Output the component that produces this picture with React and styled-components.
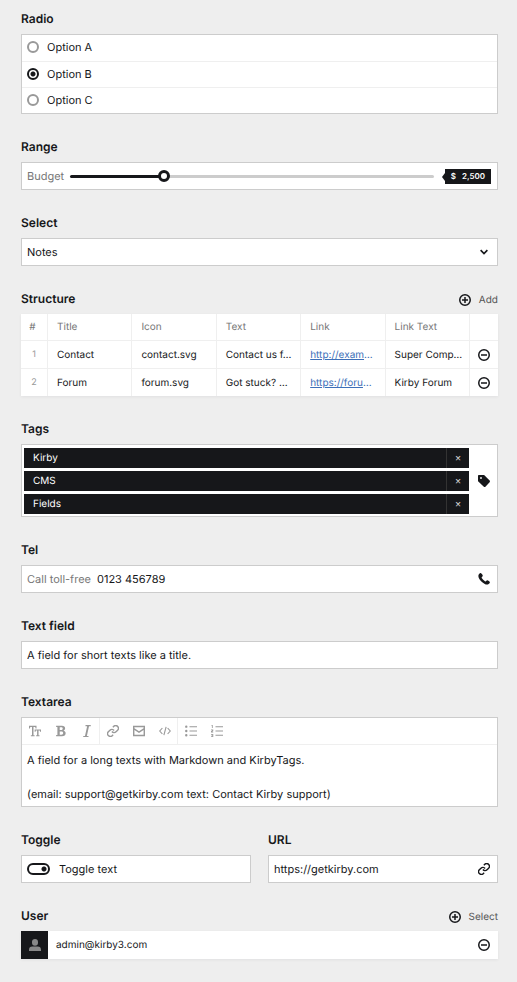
import React, { useState } from "react";
import styled, { createGlobalStyle, css } from "styled-components";

const INK = "#16171a";
const BORDER = "#ccc";
const LIGHT = "#efefef";
const MUTED = "#777";

const GlobalStyle = createGlobalStyle`
  *, *::before, *::after { box-sizing: border-box; }
  body {
    margin: 0;
    background: #eee;
    color: ${INK};
    font: 400 11px/16px Inter, "Liberation Sans", sans-serif;
    text-rendering: geometricPrecision;
  }
  button, input, textarea, select { font: inherit; color: inherit; text-rendering: inherit; }
  button { border: 0; padding: 0; background: none; cursor: pointer; }
`;

const Form = styled.form`
  display: flex;
  flex-direction: column;
  gap: 24px;
  padding: 10px 19px 23px 21px;
`;

const FieldSet = styled.fieldset`
  margin: 0;
  padding: 0;
  border: 0;
  min-width: 0;
`;

const Columns = styled.div`
  display: grid;
  grid-template-columns: 1fr 1fr;
  gap: 17px;
`;

const Header = styled.div`
  display: flex;
  justify-content: space-between;
  align-items: flex-start;
  height: 24px;
`;

const Label = styled.label`
  font-size: 12px;
  font-weight: 600;
  line-height: 18px;
`;

const HeaderButton = styled.button`
  display: flex;
  align-items: center;
  gap: 8px;
  height: 20px;
  font-size: 10px;
`;

const HeaderButtonText = styled.span`
  color: #555;
`;

const Box = styled.div`
  display: flex;
  align-items: center;
  min-height: 28px;
  background: #fff;
  border: 1px solid ${BORDER};
`;

const Affix = styled.span`
  padding-left: 5px;
  color: ${MUTED};
`;

const inputReset = css`
  flex: 1;
  min-width: 0;
  height: 26px;
  margin: 0;
  border: 0;
  padding: 0 5px;
  background: none;
  outline: 0;
`;

const TextInput = styled.input`
  ${inputReset}
  ${Affix} + & { padding-left: 6px; }
`;

const SelectInput = styled.select`
  ${inputReset}
  appearance: none;
`;

const IconCell = styled.span`
  display: flex;
  flex: none;
  align-items: center;
  justify-content: center;
  width: 26px;
`;

const Svg = styled.svg`
  display: block;
  flex: none;
  width: 12px;
  height: 12px;
  fill: currentColor;
`;

const Options = styled.ul`
  margin: 0;
  padding: 0;
  list-style: none;
  background: #fff;
  border: 1px solid ${BORDER};
`;

const Option = styled.li`
  height: 26px;
  & + & { border-top: 1px solid ${LIGHT}; }
`;

const OptionLabel = styled.label`
  display: flex;
  align-items: center;
  gap: 8px;
  height: 24px;
  padding-left: 5px;
`;

const RadioInput = styled.input`
  appearance: none;
  width: 12px;
  height: 12px;
  margin: 0;
  border: 2px solid #999;
  border-radius: 50%;
  &:checked {
    border-color: ${INK};
    background: radial-gradient(circle, ${INK} 0 2px, #fff 3px);
  }
`;

const RangeInput = styled.input`
  appearance: none;
  flex: 1;
  min-width: 0;
  height: 12px;
  margin: 0 0 0 6px;
  background: none;
  &::-webkit-slider-runnable-track {
    height: 3px;
    border-radius: 2px;
    background: linear-gradient(to right, ${INK} var(--fill), ${BORDER} var(--fill));
  }
  &::-webkit-slider-thumb {
    appearance: none;
    width: 12px;
    height: 12px;
    margin-top: -5px;
    border: 3px solid ${INK};
    border-radius: 50%;
    background: #fff;
  }
`;

const RangeTooltip = styled.output`
  position: relative;
  display: flex;
  gap: 6px;
  margin: 0 6px 0 11px;
  padding: 0 6px;
  background: ${INK};
  color: #fff;
  font-size: 8px;
  font-weight: 600;
  line-height: 15px;
  &::before {
    content: "";
    position: absolute;
    top: 4px;
    left: -3px;
    border: solid transparent;
    border-width: 4px 3px 4px 0;
    border-right-color: ${INK};
  }
`;

const Table = styled.table`
  width: 100%;
  table-layout: fixed;
  border-collapse: separate;
  border-spacing: 0;
  background: #fff;
  font-size: 10px;
  box-shadow: 0 1px 3px rgba(22, 23, 26, 0.06);
`;

const Cell = styled.td`
  height: 28px;
  padding: 0 4px 0 9px;
  border-right: 1px solid ${LIGHT};
  border-bottom: 1px solid ${LIGHT};
  text-align: left;
  font-weight: 400;
  white-space: nowrap;
  overflow: hidden;
  text-overflow: ellipsis;
  color: ${(p) => (p.$head ? MUTED : INK)};
  &:last-child { border-right: 0; }
  thead & { height: 27px; }
  tbody tr:last-child & { height: 27px; border-bottom: 0; }
`;

const IndexCell = styled(Cell)`
  width: 27px;
  padding: 0 ${(p) => (p.$head ? 3 : 0)}px 0 0;
  text-align: center;
  font-size: ${(p) => (p.$head ? 10 : 9)}px;
  color: ${(p) => (p.$head ? MUTED : "#999")};
`;

const ActionCell = styled(Cell)`
  width: 28px;
  padding: 0;
`;

const LinkCell = styled(Cell)`
  color: #3d6fb8;
`;

const Link = styled.a`
  color: inherit;
  text-decoration: underline;
`;

const IconButton = styled.button`
  display: flex;
  align-items: center;
  justify-content: center;
  width: 28px;
  height: 26px;
`;

const TagList = styled.div`
  display: flex;
  flex: 1;
  flex-direction: column;
  gap: 3px;
  padding: 3px 2px 2px;
`;

const Tag = styled.div`
  display: flex;
  align-items: center;
  height: 20px;
  padding-left: 9px;
  background: ${INK};
  color: #fff;
  font-size: 10px;
`;

const TagText = styled.span`
  flex: 1;
`;

const TagRemove = styled.button`
  width: 23px;
  height: 20px;
  border-left: 1px solid #333;
  color: #ccc;
  line-height: 20px;
`;

const Editor = styled.div`
  background: #fff;
  border: 1px solid ${BORDER};
`;

const Toolbar = styled.div`
  display: flex;
  height: 27px;
  border-bottom: 1px solid ${LIGHT};
  color: #999;
`;

const ToolGroup = styled.div`
  display: flex;
  & + & {
    margin-left: -1px;
    border-left: 1px solid ${LIGHT};
  }
`;

const ToolButton = styled.button`
  display: flex;
  align-items: center;
  justify-content: center;
  width: 26px;
`;

const TextArea = styled.textarea`
  display: block;
  width: 100%;
  height: 61px;
  padding: 7px 5px 3px;
  border: 0;
  outline: 0;
  resize: none;
  overflow: hidden;
  background: none;
  line-height: 17px;
`;

const ToggleLabel = styled.label`
  display: flex;
  align-items: center;
  gap: 9px;
  padding-left: 5px;
`;

const ToggleInput = styled.input`
  appearance: none;
  width: 23px;
  height: 12px;
  margin: 0;
  border: 2px solid ${INK};
  border-radius: 6px;
  background: radial-gradient(circle at 4px 4px, ${INK} 0 2px, #fff 3px);
  &:checked {
    background: radial-gradient(circle at 15px 4px, ${INK} 0 2px, #fff 3px);
  }
`;

const UserItem = styled.div`
  display: flex;
  align-items: center;
  height: 28px;
  background: #fff;
  font-size: 10px;
  box-shadow: 0 1px 3px rgba(22, 23, 26, 0.06);
`;

const Avatar = styled.span`
  display: flex;
  align-items: center;
  justify-content: center;
  align-self: stretch;
  width: 27px;
  background: ${INK};
  color: #888;
`;

const UserName = styled.span`
  flex: 1;
  padding-left: 8px;
`;

const icons = {
  add: <path d="M8 0a8 8 0 100 16A8 8 0 008 0zm0 14A6 6 0 118 2a6 6 0 010 12zM9 4H7v3H4v2h3v3h2V9h3V7H9z" />,
  remove: <path d="M8 0a8 8 0 100 16A8 8 0 008 0zm0 14A6 6 0 118 2a6 6 0 010 12zM4 7h8v2H4z" />,
  angle: <path d="M3.500 5.500L8 10l4.500-4.500" fill="none" stroke="currentColor" strokeWidth="2.200" />,
  tag: <path fillRule="evenodd" d="M1 0h6.5c.4 0 .7.1 1 .4l7 7c.6.6.6 1.5 0 2.1l-5.600 6c-.6.6-1.500.6-2.100 0L.4 8.500A1.500 1.500 0 010 7.500V1a1 1 0 011-1zm3 5.200a1.200 1.200 0 100-2.400 1.200 1.200 0 000 2.400z" />,
  phone: <path d="M1.200 1.800C2.200.6 3.300-.1 4.100.2c.8.4 2.200 2.400 2.300 3.300.1 1-1.700 1.800-1.600 2.600.1 1.300 3.700 5 5.100 5.100.8.1 1.600-1.700 2.600-1.600.9.1 2.900 1.500 3.300 2.300.3.8-.4 1.900-1.600 2.900-1.900 1.500-5.700.6-9.700-3.400S-.3 3.700 1.200 1.800z" />,
  title: <path d="M0 1h10v3.500H8.800L8.300 2.500H6v11h1.500V15h-5v-1.500H4v-11H1.700l-.5 2H0zM7.500 6H16v3h-1.200l-.4-1.600h-1.700v6.200H14V15H9.500v-1.400h1.300V7.400H9.200L8.700 9H7.500z" />,
  bold: <path fillRule="evenodd" d="M1.500 1h7.800c2.700 0 4.200 1.300 4.200 3.400 0 1.500-.8 2.600-2.200 3.100 1.900.4 2.900 1.600 2.900 3.400 0 2.600-1.800 4.100-4.900 4.100H1.500v-1.700h1.700V2.700H1.500zM6.300 2.900v3.900h2c1.300 0 2-.7 2-2s-.7-1.900-2-1.900zm0 5.600v4.600h2.300c1.500 0 2.300-.8 2.300-2.300s-.8-2.300-2.300-2.300z" />,
  italic: <path d="M6 0h7v1.500h-2.300L7.800 14.500H10V16H3v-1.500h2.300L8.200 1.500H6z" />,
  link: (
    <g fill="none" stroke="currentColor" strokeWidth="2.600" transform="translate(-.7 -.7) scale(.725)">
      <path d="M10 13a5 5 0 0 0 7.540.540l3-3a5 5 0 0 0-7.070-7.070l-1.720 1.710" />
      <path d="M14 11a5 5 0 0 0-7.540-.540l-3 3a5 5 0 0 0 7.070 7.070l1.710-1.710" />
    </g>
  ),
  email: <path fillRule="evenodd" d="M0 1h16v14H0zM1.900 2.900v1.400L8 8.300l6.100-4V2.900zm0 3.700v6.500h12.200V6.600L8 10.500z" />,
  code: <path d="M4.500 4L1 8l3.500 4M11.500 4L15 8l-3.500 4M9.500 2.500l-3 11" fill="none" stroke="currentColor" strokeWidth="1.500" />,
  ul: <path d="M6 1.500h10v1.500H6zM6 7.200h10v1.500H6zM6 12.900h10v1.500H6zM1.700.6a1.600 1.600 0 110 3.200 1.600 1.600 0 010-3.200zM1.700 6.400a1.600 1.600 0 110 3.200 1.600 1.600 0 010-3.200zM1.700 12.100a1.600 1.600 0 110 3.200 1.600 1.600 0 010-3.200z" />,
  ol: <path d="M6 1.500h10v1.500H6zM6 7.200h10v1.500H6zM6 12.900h10v1.500H6zM.8 0h1.500v4H1.200V1.100H.5zM0 6h3v2.100L1.500 9H3v1H0V8.300L1.900 7H0zM0 12h3v4H0v-1h1.800v-.6H.6v-.9h1.200V13H0z" />,
  user: <path d="M8 0a4 4 0 014 4v1a4 4 0 01-8 0V4a4 4 0 014-4zM4.500 10h7A4.500 4.500 0 0116 14.500V16H0v-1.500A4.500 4.500 0 014.500 10z" />,
};

function Icon({ name }) {
  return (
    <Svg viewBox="0 0 16 16" aria-hidden="true">
      {icons[name]}
    </Svg>
  );
}

const rows = [
  { title: "Contact", icon: "contact.svg", text: "Contact us f…", link: "http://exam", linkText: "Super Comp…" },
  { title: "Forum", icon: "forum.svg", text: "Got stuck? …", link: "https://foru", linkText: "Kirby Forum" },
];

const tools = [
  [["title", "Headline"], ["bold", "Bold"], ["italic", "Italic"]],
  [["link", "Link"], ["email", "Email"], ["code", "Code"]],
  [["ul", "Bullet list"], ["ol", "Ordered list"]],
];

function BudgetRange() {
  const [value, setValue] = useState(2500);
  return (
    <Box>
      <Affix>Budget</Affix>
      <RangeInput
        id="range"
        type="range"
        min="0"
        max="10000"
        step="100"
        value={value}
        onChange={(e) => setValue(Number(e.target.value))}
        style={{ "--fill": `${value / 100}%` }}
      />
      <RangeTooltip htmlFor="range">
        <span>$</span>
        <span>{value.toLocaleString("en-US")}</span>
      </RangeTooltip>
    </Box>
  );
}

export default function App() {
  const [option, setOption] = useState("Option B");
  const [tags, setTags] = useState(["Kirby", "CMS", "Fields"]);
  return (
    <>
      <GlobalStyle />
      <Form onSubmit={(e) => e.preventDefault()}>
        <FieldSet aria-labelledby="radio-label">
          <Header><Label as="span" id="radio-label">Radio</Label></Header>
          <Options>
            {["Option A", "Option B", "Option C"].map((name) => (
              <Option key={name}>
                <OptionLabel>
                  <RadioInput type="radio" name="radio" checked={option === name} onChange={() => setOption(name)} />
                  {name}
                </OptionLabel>
              </Option>
            ))}
          </Options>
        </FieldSet>

        <FieldSet>
          <Header><Label htmlFor="range">Range</Label></Header>
          <BudgetRange />
        </FieldSet>

        <FieldSet>
          <Header><Label htmlFor="select">Select</Label></Header>
          <Box>
            <SelectInput id="select" defaultValue="Notes">
              <option>Notes</option>
            </SelectInput>
            <IconCell><Icon name="angle" /></IconCell>
          </Box>
        </FieldSet>

        <FieldSet aria-labelledby="structure-label">
          <Header>
            <Label as="span" id="structure-label">Structure</Label>
            <HeaderButton type="button"><Icon name="add" /><HeaderButtonText>Add</HeaderButtonText></HeaderButton>
          </Header>
          <Table>
            <thead>
              <tr>
                <IndexCell as="th" $head>#</IndexCell>
                {["Title", "Icon", "Text", "Link", "Link Text"].map((name) => (
                  <Cell as="th" key={name} $head>{name}</Cell>
                ))}
                <ActionCell as="th" />
              </tr>
            </thead>
            <tbody>
              {rows.map((row, i) => (
                <tr key={row.title}>
                  <IndexCell>{i + 1}</IndexCell>
                  <Cell>{row.title}</Cell>
                  <Cell>{row.icon}</Cell>
                  <Cell>{row.text}</Cell>
                  <LinkCell><Link href="#structure-label">{row.link}</Link>…</LinkCell>
                  <Cell>{row.linkText}</Cell>
                  <ActionCell>
                    <IconButton type="button" aria-label={`Remove ${row.title}`}><Icon name="remove" /></IconButton>
                  </ActionCell>
                </tr>
              ))}
            </tbody>
          </Table>
        </FieldSet>

        <FieldSet aria-labelledby="tags-label">
          <Header><Label as="span" id="tags-label">Tags</Label></Header>
          <Box>
            <TagList>
              {tags.map((tag) => (
                <Tag key={tag}>
                  <TagText>{tag}</TagText>
                  <TagRemove type="button" aria-label={`Remove ${tag}`} onClick={() => setTags(tags.filter((t) => t !== tag))}>
                    ×
                  </TagRemove>
                </Tag>
              ))}
            </TagList>
            <IconCell><Icon name="tag" /></IconCell>
          </Box>
        </FieldSet>

        <FieldSet>
          <Header><Label htmlFor="tel">Tel</Label></Header>
          <Box>
            <Affix>Call toll-free</Affix>
            <TextInput id="tel" type="tel" defaultValue="0123 456789" />
            <IconCell><Icon name="phone" /></IconCell>
          </Box>
        </FieldSet>

        <FieldSet>
          <Header><Label htmlFor="text">Text field</Label></Header>
          <Box>
            <TextInput id="text" type="text" defaultValue="A field for short texts like a title." />
          </Box>
        </FieldSet>

        <FieldSet>
          <Header><Label htmlFor="textarea">Textarea</Label></Header>
          <Editor>
            <Toolbar>
              {tools.map((group, i) => (
                <ToolGroup key={i}>
                  {group.map(([name, label]) => (
                    <ToolButton key={name} type="button" aria-label={label}><Icon name={name} /></ToolButton>
                  ))}
                </ToolGroup>
              ))}
            </Toolbar>
            <TextArea
              id="textarea"
              defaultValue={"A field for a long texts with Markdown and KirbyTags.\n\n(email: support@getkirby.com text: Contact Kirby support)"}
            />
          </Editor>
        </FieldSet>

        <Columns>
          <FieldSet>
            <Header><Label htmlFor="toggle">Toggle</Label></Header>
            <Box>
              <ToggleLabel>
                <ToggleInput id="toggle" type="checkbox" role="switch" defaultChecked />
                Toggle text
              </ToggleLabel>
            </Box>
          </FieldSet>
          <FieldSet>
            <Header><Label htmlFor="url">URL</Label></Header>
            <Box>
              <TextInput id="url" type="url" defaultValue="https://getkirby.com" />
              <IconCell><Icon name="link" /></IconCell>
            </Box>
          </FieldSet>
        </Columns>

        <FieldSet aria-labelledby="user-label">
          <Header>
            <Label as="span" id="user-label">User</Label>
            <HeaderButton type="button"><Icon name="add" /><HeaderButtonText>Select</HeaderButtonText></HeaderButton>
          </Header>
          <UserItem>
            <Avatar><Icon name="user" /></Avatar>
            <UserName>admin@kirby3.com</UserName>
            <IconButton type="button" aria-label="Remove user"><Icon name="remove" /></IconButton>
          </UserItem>
        </FieldSet>
      </Form>
    </>
  );
}
